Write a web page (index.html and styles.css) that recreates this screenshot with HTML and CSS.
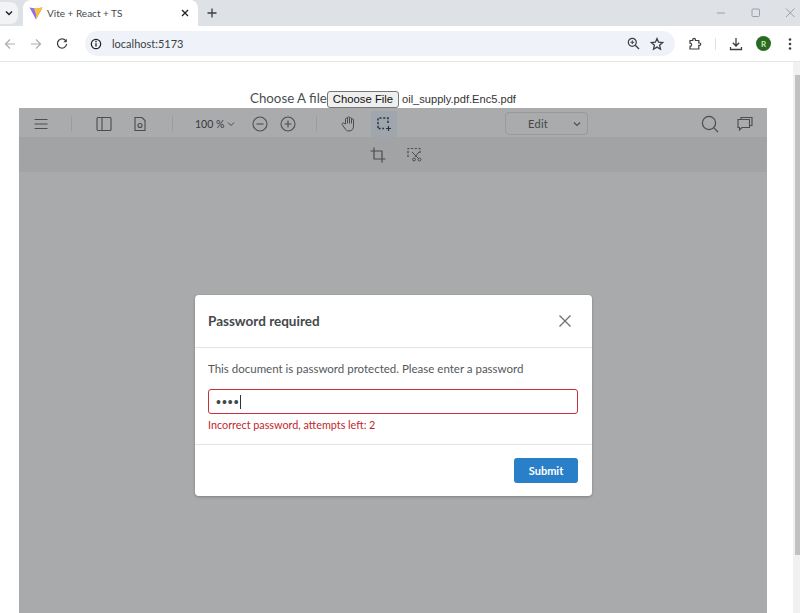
FILE: index.html
```html
<!DOCTYPE html>
<html>
<head>
<meta charset="utf-8">
<title>Vite + React + TS</title>
<link rel="stylesheet" href="styles.css">
</head>
<body>

<div class="browser">
	<div class="tab-strip">
		<div class="tab-search">
			<svg width="10" height="10" viewBox="0 0 10 10"><path d="M2 3.5 5 6.5 8 3.5" fill="none" stroke="#202124" stroke-width="1.5"/></svg>
		</div>
		<div class="tab">
			<svg class="favicon" width="14" height="14" viewBox="0 0 14 14">
				<path d="M0.5 1.5 7 2.6 13.5 1.5 7 13.5Z" fill="#8f6cf5"/>
				<path d="M7 2.6 13.5 1.5 7 13.5Z" fill="#ffbd2e"/>
				<path d="M5 2.3 9.5 2 7.2 9Z" fill="#f7c62f"/>
			</svg>
			<span class="tab-title">Vite + React + TS</span>
			<svg class="tab-close" width="10" height="10" viewBox="0 0 10 10"><path d="M2 2 8 8M8 2 2 8" stroke="#202124" stroke-width="1.3"/></svg>
		</div>
		<svg class="new-tab" width="12" height="12" viewBox="0 0 12 12"><path d="M6 1.5V10.5M1.5 6H10.5" stroke="#3c4043" stroke-width="1.3"/></svg>
		<div class="window-controls">
			<svg width="12" height="12" viewBox="0 0 12 12"><path d="M1 6H9" stroke="#9aa0a6"/></svg>
			<svg width="12" height="12" viewBox="0 0 12 12"><rect x="2" y="2" width="7.5" height="7.5" rx="1" fill="none" stroke="#9aa0a6"/></svg>
			<svg width="12" height="12" viewBox="0 0 12 12"><path d="M2 1.5 10.5 10M10.5 1.5 2 10" stroke="#9aa0a6"/></svg>
		</div>
	</div>

	<div class="nav-bar">
		<div class="nav-buttons">
			<svg width="12" height="12" viewBox="0 0 12 12"><path d="M11 6H1.5M6 1.5 1.5 6 6 10.5" fill="none" stroke="#a9adb2" stroke-width="1.2"/></svg>
			<svg width="12" height="12" viewBox="0 0 12 12"><path d="M1 6H10.5M6 1.5 10.5 6 6 10.5" fill="none" stroke="#a9adb2" stroke-width="1.2"/></svg>
			<svg width="12" height="12" viewBox="0 0 12 12"><path d="M10 3.2A4.6 4.6 0 1 0 10.6 6" fill="none" stroke="#3c4043" stroke-width="1.3"/><path d="M10.8 0.8V4.2H7.4Z" fill="#3c4043"/></svg>
		</div>
		<div class="address-bar">
			<svg width="12" height="12" viewBox="0 0 12 12"><circle cx="6" cy="6" r="4.7" fill="none" stroke="#202124" stroke-width="1.2"/><path d="M6 5.2V8.6" stroke="#202124" stroke-width="1.3"/><circle cx="6" cy="3.6" r=".8" fill="#202124"/></svg>
			<span class="url">localhost:5173</span>
			<svg class="zoom-icon" width="13" height="13" viewBox="0 0 13 13"><circle cx="5.3" cy="5.3" r="4" fill="none" stroke="#3c4043" stroke-width="1.2"/><path d="M8.3 8.3 12 12" stroke="#3c4043" stroke-width="1.4"/><path d="M3.4 5.3H7.2M5.3 3.4V7.2" stroke="#3c4043"/></svg>
			<svg width="14" height="14" viewBox="0 0 14 14"><path d="M7 1.6 8.6 5.2 12.6 5.6 9.6 8.2 10.5 12.2 7 10.1 3.5 12.2 4.4 8.2 1.4 5.6 5.4 5.2Z" fill="none" stroke="#3c4043" stroke-width="1.3"/></svg>
		</div>
		<div class="nav-actions">
			<svg width="14" height="14" viewBox="0 0 14 14"><path d="M2 3.5H4.8V2.6A1.3 1.3 0 0 1 7.4 2.6V3.5H10.8V6H11.6A1.2 1.2 0 0 1 11.6 8.4H10.8V12H2V9.3A1.6 1.6 0 0 0 2 6.1Z" fill="none" stroke="#3c4043" stroke-width="1.2"/></svg>
			<span class="nav-divider"></span>
			<svg width="14" height="14" viewBox="0 0 14 14"><path d="M7 1V9M3.8 5.8 7 9 10.2 5.8M1.5 10V12.5H12.5V10" fill="none" stroke="#3c4043" stroke-width="1.3"/></svg>
			<span class="avatar">R</span>
			<svg class="menu-dots" width="4" height="14" viewBox="0 0 4 14"><circle cx="2" cy="2.5" r="1.3" fill="#3c4043"/><circle cx="2" cy="7" r="1.3" fill="#3c4043"/><circle cx="2" cy="11.5" r="1.3" fill="#3c4043"/></svg>
		</div>
	</div>
</div>

<div class="page">
	<div class="content">
		<div class="file-row">
			<label class="file-label">Choose A file</label><span class="file-button">Choose File</span><span class="file-name">oil_supply.pdf.Enc5.pdf</span>
		</div>

		<div class="viewer">
			<div class="toolbar">
				<div class="toolbar-group group-menu">
					<svg width="16" height="16" viewBox="0 0 16 16"><path d="M1.5 3.5H14.5M1.5 8H14.5M1.5 12.5H14.5" stroke="#4a4e50" stroke-width="1.1"/></svg>
				</div>
				<span class="toolbar-divider"></span>
				<div class="toolbar-group group-view">
					<svg width="16" height="16" viewBox="0 0 16 16"><rect x="1" y="1.5" width="14" height="13" rx="1" fill="none" stroke="#4a4e50" stroke-width="1.1"/><path d="M6 1.5V14.5" stroke="#4a4e50" stroke-width="1.1"/></svg>
					<svg width="16" height="16" viewBox="0 0 16 16"><path d="M3 1.5H10L13 4.5V14.5H3Z" fill="none" stroke="#4a4e50" stroke-width="1.1"/><circle cx="8" cy="9.5" r="2" fill="none" stroke="#4a4e50" stroke-width="1.1"/></svg>
				</div>
				<span class="toolbar-divider"></span>
				<div class="toolbar-group group-zoom">
					<span class="zoom-value">100 %</span>
					<svg class="zoom-caret" width="8" height="8" viewBox="0 0 8 8"><path d="M1 2.5 4 5.5 7 2.5" fill="none" stroke="#4a4e50"/></svg>
					<svg class="zoom-out" width="16" height="16" viewBox="0 0 16 16"><circle cx="8" cy="8" r="7" fill="none" stroke="#4a4e50" stroke-width="1.1"/><path d="M4.5 8H11.5" stroke="#4a4e50" stroke-width="1.1"/></svg>
					<svg width="16" height="16" viewBox="0 0 16 16"><circle cx="8" cy="8" r="7" fill="none" stroke="#4a4e50" stroke-width="1.1"/><path d="M4.5 8H11.5M8 4.5V11.5" stroke="#4a4e50" stroke-width="1.1"/></svg>
				</div>
				<span class="toolbar-divider"></span>
				<div class="toolbar-group group-tools">
					<svg width="18" height="18" viewBox="0 0 18 18"><path d="M5.5 9V4.2A1 1 0 0 1 7.5 4.2V2.8A1 1 0 0 1 9.5 2.8V3.4A1 1 0 0 1 11.5 3.8V4.8A1 1 0 0 1 13.5 5V11C13.5 14 12 16 9 16 6.8 16 5.6 15 4.6 13L2.2 9.6C1.6 8.4 3.2 7.4 4.2 8.4Z M7.5 4.2V8.5M9.5 3.4V8.5M11.5 4.8V8.5" fill="none" stroke="#4a4e50" stroke-width="1"/></svg>
					<span class="tool-active">
						<svg width="16" height="16" viewBox="0 0 16 16"><path d="M2 12V2H12V8" fill="none" stroke="#2f3436" stroke-width="1.5" stroke-dasharray="2.2 1.6"/><path d="M2.5 12.5H8" stroke="#2f3436" stroke-width="1.5" stroke-dasharray="2.2 1.6"/><path d="M12.5 10V15M10 12.5H15" stroke="#2f3436" stroke-width="1.2"/></svg>
					</span>
				</div>
				<div class="mode-select">
					<span>Edit</span>
					<svg width="8" height="8" viewBox="0 0 8 8"><path d="M1 2.5 4 5.5 7 2.5" fill="none" stroke="#4a4e50" stroke-width="1.1"/></svg>
				</div>
				<div class="toolbar-group group-right">
					<svg width="18" height="18" viewBox="0 0 18 18"><circle cx="8" cy="8" r="6.6" fill="none" stroke="#4a4e50" stroke-width="1.2"/><path d="M12.8 12.8 17 17" stroke="#4a4e50" stroke-width="1.2"/></svg>
					<svg width="16" height="16" viewBox="0 0 16 16"><path d="M4 3.5V1.5H15V9.5H12.5" fill="none" stroke="#4a4e50" stroke-width="1.1"/><path d="M1 3.5H12.5V11.5H5L2.5 14V11.5H1Z" fill="none" stroke="#4a4e50" stroke-width="1.1"/></svg>
				</div>
			</div>

			<div class="sub-toolbar">
				<svg width="16" height="16" viewBox="0 0 16 16"><path d="M4 0.5V12H15.5M0.5 4H12V15.5" fill="none" stroke="#4a4e50" stroke-width="1.2"/></svg>
				<svg width="15" height="15" viewBox="0 0 15 15"><path d="M1 10V1.5H13V6" fill="none" stroke="#4a4e50" stroke-width="1.2" stroke-dasharray="2.2 1.6"/><path d="M5 5 12 12M12 5 8 10" fill="none" stroke="#4a4e50"/><circle cx="7" cy="12.5" r="1.4" fill="none" stroke="#4a4e50"/><circle cx="12.5" cy="12.5" r="1.4" fill="none" stroke="#4a4e50"/></svg>
			</div>

			<div class="document-area"></div>

			<div class="dialog">
				<div class="dialog-header">
					<h2 class="dialog-title">Password required</h2>
					<svg width="14" height="14" viewBox="0 0 14 14"><path d="M1.5 1.5 12.5 12.5M12.5 1.5 1.5 12.5" stroke="#6a6f73" stroke-width="1.3"/></svg>
				</div>
				<div class="dialog-body">
					<p class="dialog-text">This document is password protected. Please enter a password</p>
					<div class="password-input"><span class="dots">••••</span><span class="caret"></span></div>
					<p class="dialog-error">Incorrect password, attempts left: 2</p>
				</div>
				<div class="dialog-footer">
					<button class="submit-button">Submit</button>
				</div>
			</div>
		</div>
	</div>

	<div class="scrollbar">
		<div class="scroll-arrow"></div>
		<div class="scroll-thumb"></div>
	</div>
</div>

</body>
</html>
```

FILE: styles.css
```css
* {
	box-sizing: border-box;
}

html, body {
	margin: 0;
	height: 100%;
	overflow: hidden;
}

body {
	display: flex;
	flex-direction: column;
	background: #fff;
	font-family: Lato, "Open Sans", sans-serif;
}

svg {
	display: block;
	flex: none;
}

/* browser chrome */
.browser {
	flex: none;
}

.tab-strip {
	height: 26px;
	display: flex;
	align-items: center;
	background: #dee1e6;
}

.tab-search {
	width: 18px;
	height: 22px;
	margin-right: 5px;
	display: flex;
	align-items: center;
	justify-content: center;
	background: #f1f3f4;
	border-radius: 0 8px 8px 0;
}

.tab {
	width: 175px;
	height: 26px;
	padding: 0 8px 0 6px;
	display: flex;
	align-items: center;
	background: #fff;
	border-radius: 8px 8px 0 0;
}

.tab-title {
	margin-left: 4px;
	flex: 1;
	font-size: 10px;
	color: #45494d;
}

.new-tab {
	margin-left: 8px;
}

.window-controls {
	margin-left: auto;
	padding-right: 4px;
	display: flex;
	gap: 22px;
}

.nav-bar {
	height: 36px;
	display: flex;
	align-items: center;
	border-bottom: 1px solid #e3e5e8;
	background: #fff;
}

.nav-buttons {
	width: 85px;
	padding-left: 4px;
	display: flex;
	gap: 14px;
}

.address-bar {
	width: 590px;
	height: 25px;
	padding: 0 11px 0 0;
	display: flex;
	align-items: center;
	background: #eff3f9;
	border-radius: 13px;
}

.address-bar > svg:first-child {
	margin-left: 5px;
}

.url {
	margin-left: 10px;
	flex: 1;
	font-size: 11px;
	color: #3c4043;
}

.zoom-icon {
	margin-right: 10px;
}

.nav-actions {
	flex: 1;
	display: flex;
	align-items: center;
	padding-left: 13px;
}

.nav-divider {
	width: 1px;
	height: 12px;
	margin: 0 13px;
	background: #d5e3f2;
}

.avatar {
	width: 15px;
	height: 15px;
	margin-left: 13px;
	display: flex;
	align-items: center;
	justify-content: center;
	border-radius: 50%;
	background: #2a6a1f;
	color: #cfe6c5;
	font-size: 8px;
	font-weight: 700;
}

.menu-dots {
	margin-left: 17px;
}

/* page */
.page {
	flex: 1;
	min-height: 0;
	display: flex;
}

.content {
	flex: 1;
	min-width: 0;
	padding: 0 26px 0 19px;
	display: flex;
	flex-direction: column;
}

.scrollbar {
	width: 7px;
	padding-left: 2px;
	display: flex;
	flex-direction: column;
	background: #f1f1f1;
}

.scroll-arrow {
	height: 13px;
	background: #f1f1f1;
}

.scroll-thumb {
	height: 480px;
	background: #c1c1c1;
}

.file-row {
	height: 46px;
	padding: 27px 0 0 231px;
	display: flex;
	align-items: flex-start;
	white-space: nowrap;
}

.file-label {
	width: 77px;
	font-size: 13.3px;
	line-height: 19px;
	color: #4a4f52;
}

.file-button {
	width: 72px;
	height: 17px;
	margin-top: 2px;
	padding-bottom: 1px;
	display: flex;
	align-items: center;
	justify-content: center;
	border: 1px solid #767676;
	border-radius: 3px;
	background: #efefef;
	font-family: "Liberation Sans", Arial, sans-serif;
	font-size: 11.3px;
	color: #111;
}

.file-name {
	margin: 1px 0 0 3px;
	font-family: "Liberation Sans", Arial, sans-serif;
	font-size: 11.1px;
	line-height: 18px;
	color: #333;
}

/* pdf viewer */
.viewer {
	position: relative;
	flex: 1;
	display: flex;
	flex-direction: column;
	background: #a8aaab;
	font-family: Lato, "Open Sans", sans-serif;
}

.toolbar {
	height: 29px;
	padding: 2px 14px 0;
	display: flex;
	align-items: center;
	background: #a9abac;
}

.toolbar-group {
	display: flex;
	align-items: center;
}

.toolbar-divider {
	width: 1px;
	height: 15px;
	background: #9a9c9d;
}

.group-menu {
	width: 38px;
}

.group-view {
	margin-left: 24px;
	width: 76px;
	gap: 20px;
}

.group-zoom {
	margin-left: 22px;
	width: 121px;
}

.zoom-value {
	width: 32px;
	font-size: 10.5px;
	white-space: nowrap;
	color: #36393b;
}

.zoom-out {
	margin: 0 12px 0 17px;
}

.group-tools {
	margin-left: 23px;
	gap: 13px;
}

.tool-active {
	width: 26px;
	height: 26px;
	display: flex;
	align-items: center;
	justify-content: center;
	background: #9fa6ad;
	border-radius: 3px;
}

.mode-select {
	width: 83px;
	height: 23px;
	margin-left: 108px;
	padding: 0 6px 0 22px;
	display: flex;
	align-items: center;
	justify-content: space-between;
	border: 1px solid #98999a;
	border-radius: 4px;
	font-size: 11px;
	color: #444849;
}

.mode-select span {
	letter-spacing: .3px;
}

.group-right {
	margin-left: auto;
	gap: 18px;
}

.sub-toolbar {
	height: 35px;
	padding-left: 5px;
	display: flex;
	align-items: center;
	justify-content: center;
	gap: 21px;
	background: #a1a3a4;
}

.document-area {
	flex: 1;
}

.dialog {
	position: absolute;
	left: 176px;
	top: 187px;
	width: 397px;
	height: 201px;
	display: flex;
	flex-direction: column;
	background: #fff;
	border-radius: 4px;
	box-shadow: 0 1px 3px rgba(0, 0, 0, .25);
}

.dialog-header {
	height: 53px;
	padding: 0 20px 1px 13px;
	display: flex;
	align-items: center;
	justify-content: space-between;
	border-bottom: 1px solid #e1e3e5;
}

.dialog-title {
	margin: 0;
	font-size: 13.5px;
	font-weight: 700;
	color: #43484b;
}

.dialog-body {
	flex: 1;
	padding: 13px 14px 0 13px;
	border-bottom: 1px solid #e1e3e5;
}

.dialog-text {
	margin: 0;
	font-size: 11.5px;
	line-height: 16px;
	color: #53585b;
}

.password-input {
	height: 25px;
	margin-top: 12px;
	padding-left: 7px;
	display: flex;
	align-items: center;
	border: 1px solid #c7303a;
	border-radius: 3px;
}

.dots {
	font-family: "Liberation Sans", sans-serif;
	font-size: 14px;
	letter-spacing: 1px;
	color: #43484b;
}

.caret {
	width: 1px;
	height: 14px;
	background: #333;
}

.dialog-error {
	margin: 3px 0 0;
	font-size: 10.8px;
	line-height: 15px;
	color: #c01f2e;
}

.dialog-footer {
	height: 51px;
	padding: 0 14px 0 0;
	display: flex;
	align-items: center;
	justify-content: flex-end;
}

.submit-button {
	width: 64px;
	height: 25px;
	border: 0;
	border-radius: 3px;
	background: #2a80c8;
	font-family: Lato, sans-serif;
	font-size: 11px;
	font-weight: 700;
	color: #fff;
}
```
